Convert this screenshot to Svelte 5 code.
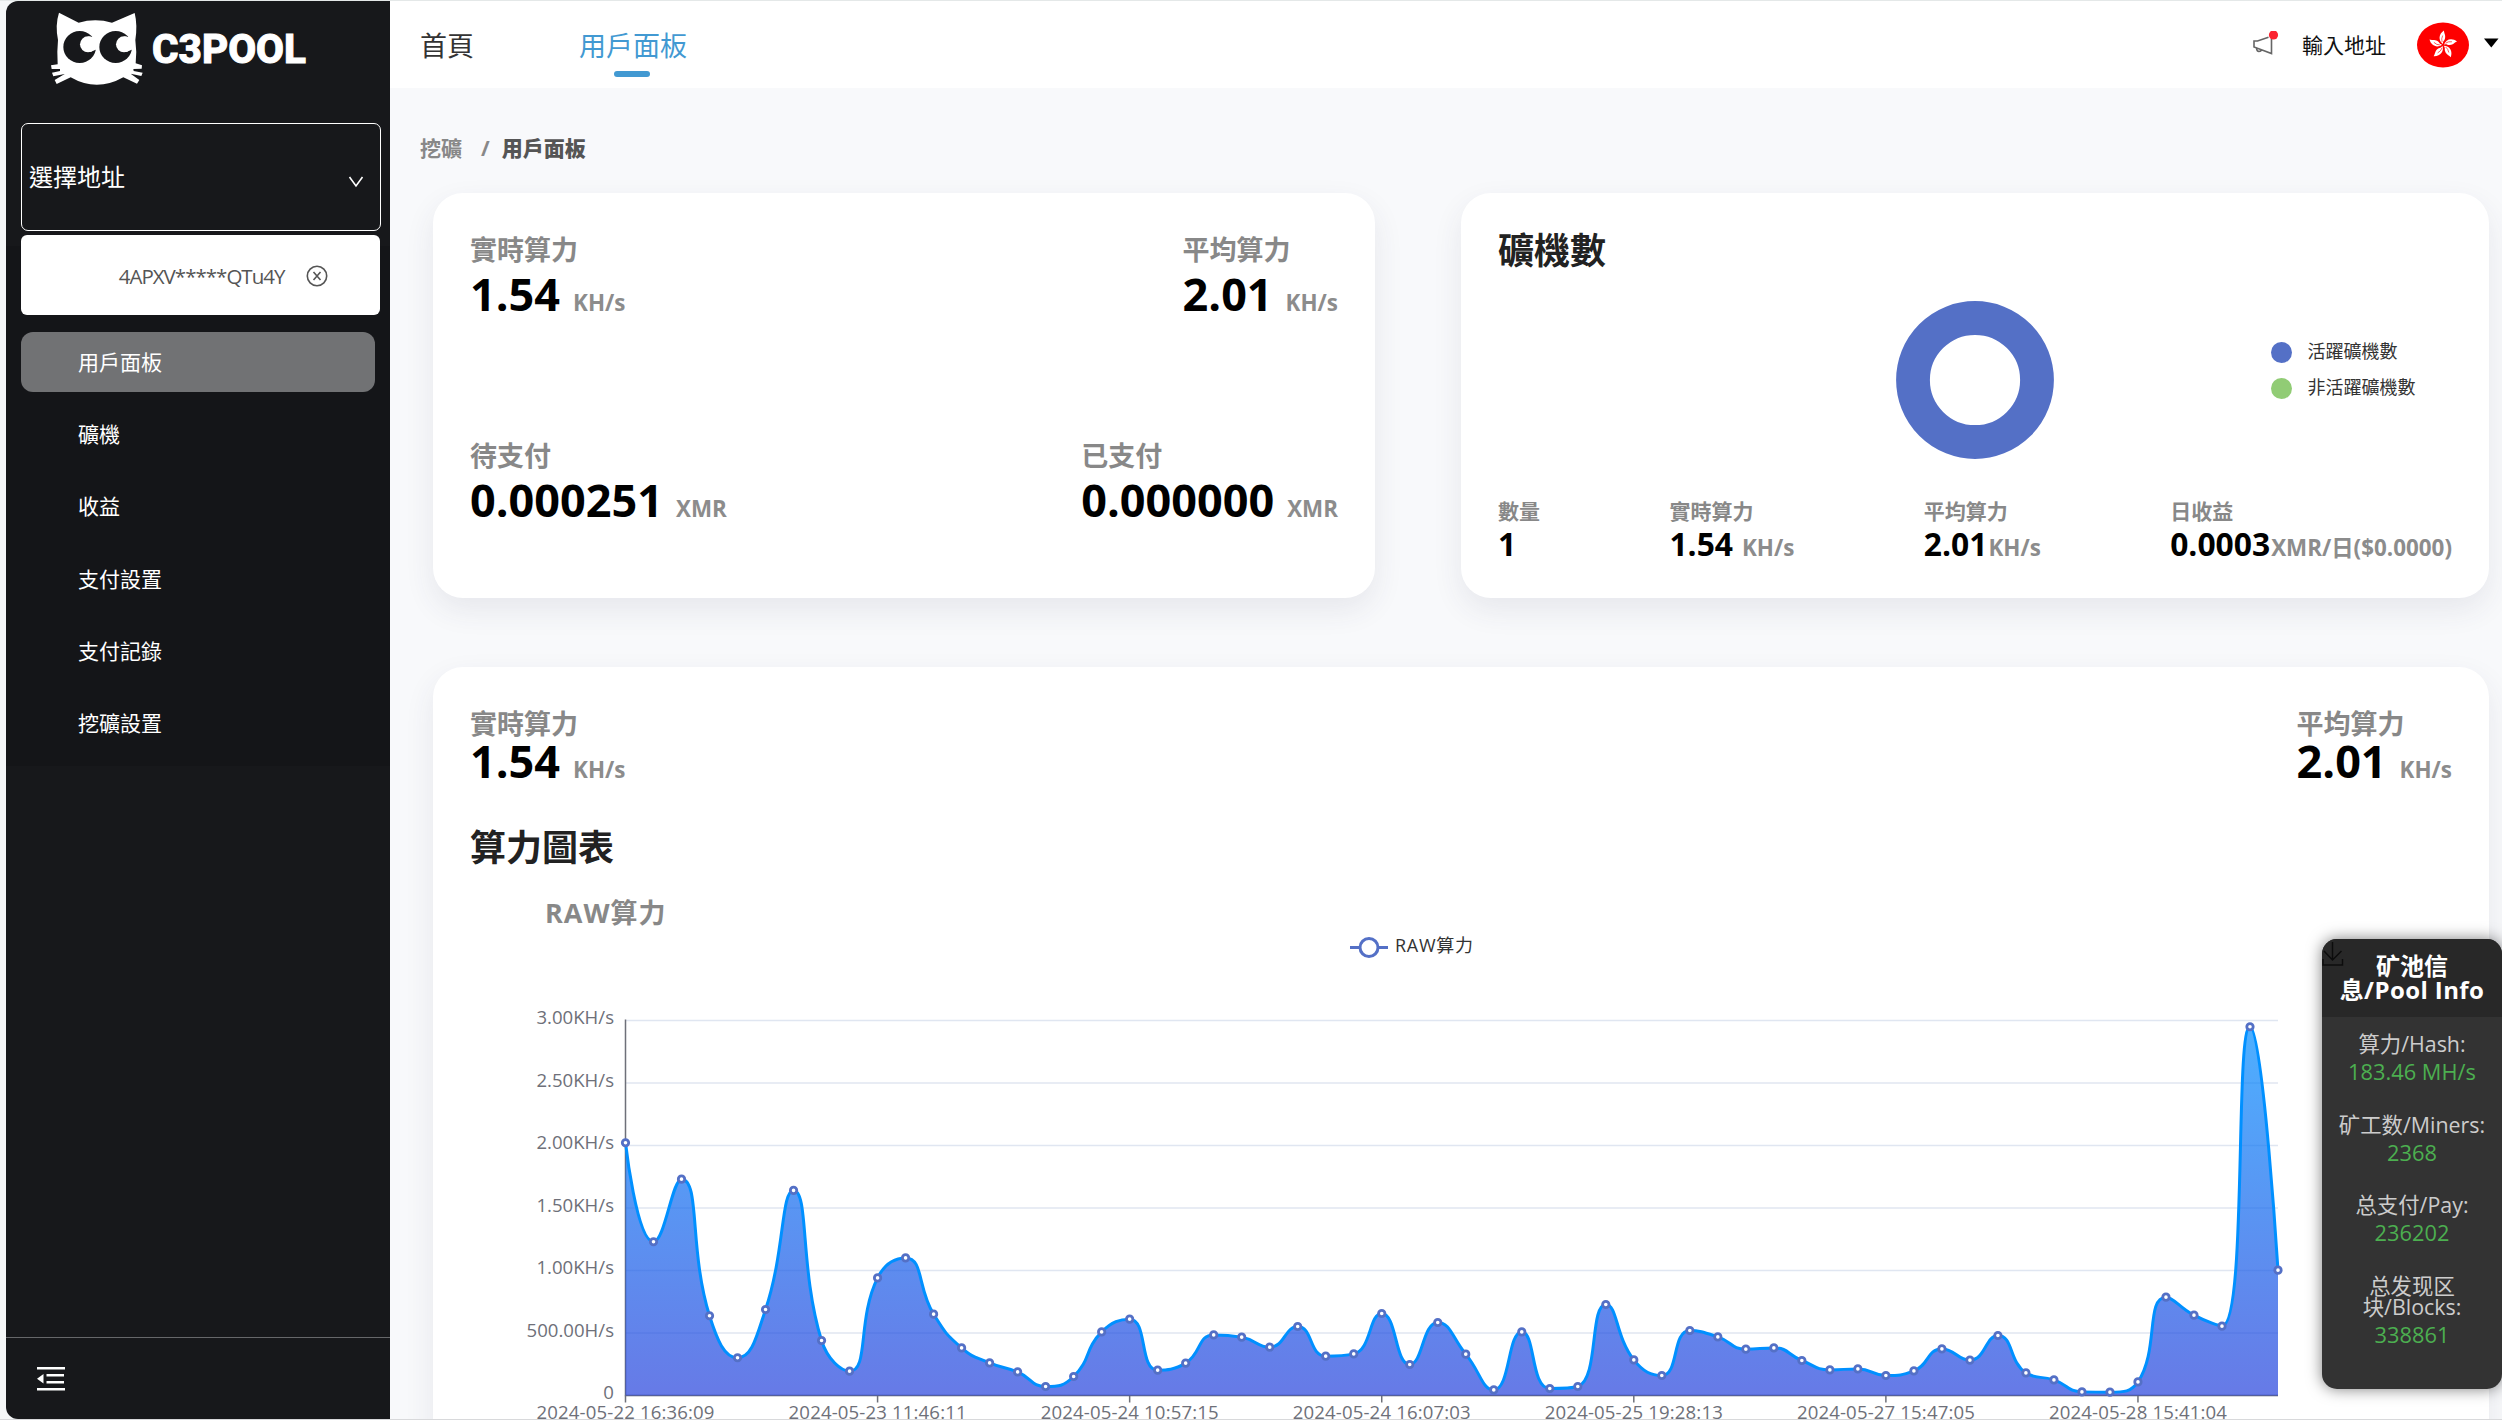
<script>
  const menu = ['用戶面板', '礦機', '收益', '支付設置', '支付記錄', '挖礦設置'];

  const pool = [
    { label: ['算力/Hash:'], value: '183.46 MH/s' },
    { label: ['矿工数/Miners:'], value: '2368' },
    { label: ['总支付/Pay:'], value: '236202' },
    { label: ['总发现区', '块/Blocks:'], value: '338861' }
  ];

  // Hashrate samples in H/s, evenly spaced along the time axis.
  const samples = [
    2022, 1230, 1731, 638, 302, 688, 1641, 440, 195, 941, 1101, 651, 381, 261, 189, 72, 152, 509,
    611, 203, 259, 485, 467, 387, 552, 315, 333, 656, 248, 584, 331, 45, 509, 56, 72, 728, 285, 160,
    520, 469, 371, 381, 280, 205, 213, 160, 197, 373, 283, 480, 181, 125, 29, 27, 109, 787, 643, 555,
    2950, 1003
  ];
  const left = 625.5;
  const right = 2278;
  const base = 1395.5;
  const top = 1020.5;
  const step = (right - left) / (samples.length - 1);
  const pts = samples.map((v, i) => [left + i * step, base - (v / 3000) * (base - top)]);

  const yTicks = ['0', '500.00H/s', '1.00KH/s', '1.50KH/s', '2.00KH/s', '2.50KH/s', '3.00KH/s'].map(
    (label, i) => ({ label, y: base - (i * (base - top)) / 6 })
  );
  const xTicks = [
    '2024-05-22 16:36:09',
    '2024-05-23 11:46:11',
    '2024-05-24 10:57:15',
    '2024-05-24 16:07:03',
    '2024-05-25 19:28:13',
    '2024-05-27 15:47:05',
    '2024-05-28 15:41:04'
  ].map((label, i) => ({ label, x: left + i * 9 * step }));

  const clamp = (v, a, b) => Math.max(Math.min(v, Math.max(a, b)), Math.min(a, b));

  // Smooth cubic path whose control points never overshoot their neighbours.
  function smoothPath(p, k = 0.5) {
    let d = `M${p[0][0]} ${p[0][1]}`;
    let c0 = p[0];
    for (let i = 1; i < p.length; i++) {
      const a = p[i - 1];
      const b = p[i];
      const n = p[i + 1];
      let c1 = b;
      let next = b;
      if (n) {
        const lp = Math.hypot(b[0] - a[0], b[1] - a[1]);
        const ln = Math.hypot(n[0] - b[0], n[1] - b[1]);
        const r = ln / (ln + lp);
        next = [0, 1].map((j) => clamp(b[j] + (n[j] - a[j]) * k * r, n[j], b[j]));
        c1 = [0, 1].map((j) => clamp(b[j] - ((next[j] - b[j]) * lp) / ln, a[j], b[j]));
        next = [0, 1].map((j) => b[j] + ((b[j] - c1[j]) * ln) / lp);
      }
      d += `C${c0[0]} ${c0[1]} ${c1[0]} ${c1[1]} ${b[0]} ${b[1]}`;
      c0 = next;
    }
    return d;
  }
  const line = smoothPath(pts);
  const area = `${line}L${right} ${base}L${left} ${base}Z`;
</script>

{#snippet stat(label, value, unit)}
  <div class="stat">
    <div class="label">{label}</div>
    <div class="value">{value}{#if unit}<span class="unit">{unit}</span>{/if}</div>
  </div>
{/snippet}

<div class="page">
  <aside>
    <svg class="logo" viewBox="0 0 384 100" width="384" height="100">
      <g transform="translate(34 -1) scale(0.33333)">
        <path fill="#fff" d="M57 38L116 68Q166 54 216 68L284 39Q293 75 286 120Q291 155 287 190L306 196L305 206L280 207L281 213L308 218L304 228L272 221L298 240L291 251L250 232Q170 277 92 232L50 252L44 240L74 222L40 229L36 218L60 213V207L35 207L33 196L53 193L52 155L54 120Q45 75 57 38Z" />
        <ellipse cx="119" cy="141" rx="49" ry="48" fill="#17181b" />
        <path fill="#fff" d="M145 109L157 111L176 112L173 147L160 152Q154 156 145 156Z" />
        <circle cx="144" cy="133" r="24" fill="#fff" />
        <ellipse cx="227" cy="141" rx="49" ry="48" fill="#17181b" />
        <path fill="#fff" d="M253 109L265 111L284 112L281 147L268 152Q262 156 253 156Z" />
        <circle cx="252" cy="133" r="24" fill="#fff" />
      </g>
      <text class="brand" x="146" y="61.500" textLength="154" lengthAdjust="spacingAndGlyphs">C3POOL</text>
    </svg>
    <div class="select">
      <span>選擇地址</span>
      <svg width="16" height="12" viewBox="0 0 16 12"><path d="M1.500 1L8 10L14.500 1" fill="none" stroke="#fff" stroke-width="1.600" /></svg>
    </div>
    <div class="address">
      <span>4APXV*****QTu4Y</span>
      <svg width="22" height="22" viewBox="0 0 22 22" fill="none" stroke="#555" stroke-width="1.600">
        <circle cx="11" cy="11" r="9.700" /><path d="M7.500 7L14.500 15M14.500 7L7.500 15" />
      </svg>
    </div>
    <nav>
      {#each menu as item, i}
        <div class="item" class:active={i === 0}>{item}</div>
      {/each}
    </nav>
    <div class="collapse">
      <svg width="28" height="26" viewBox="0 0 28 26" fill="#fff">
        <path d="M0 1H28V3.500H0ZM9.500 8H27V10.500H9.500ZM9.500 15H27V17.500H9.500ZM0 22H28V24.500H0ZM0 12.800L6.500 8V17.600Z" />
      </svg>
    </div>
  </aside>

  <div class="main">
    <header>
      <div class="tabs">
        <div class="tab">首頁</div>
        <div class="tab current">用戶面板<i></i></div>
      </div>
      <div class="tools">
        <svg class="horn" width="28" height="28" viewBox="0 0 28 28">
          <path d="M20.500 8V22.500L3 16V10H6.500L17.500 6.300M5.500 17Q5.700 20.500 8 20.500Q10 20.500 10.500 18.800" fill="none" stroke="#666" stroke-width="1.600" />
          <circle cx="22.500" cy="4" r="4.600" fill="#fb2430" />
        </svg>
        <span class="enter">輸入地址</span>
        <svg class="flag" width="52" height="46" viewBox="0 0 52 46">
          <ellipse cx="26" cy="23" rx="26" ry="22.500" fill="#fe0000" />
          <g transform="translate(26 23)">
            {#each [0, 72, 144, 216, 288] as angle}
              <g transform="rotate({angle})">
                <path d="M0 -1C-5 -4.500 -4.500 -11 1 -14.500C0.800 -12 3 -10 2 -6.500C1.500 -4 -0.500 -4 0 -1Z" fill="#fff" />
                <path d="M-0.900 -3Q-2 -6 -0.300 -9.500" fill="none" stroke="#fe0000" stroke-width="0.600" />
              </g>
            {/each}
          </g>
        </svg>
        <svg class="caret" width="16" height="10" viewBox="0 0 16 10"><path d="M1 0.500H15.500L8.300 9.500Z" /></svg>
      </div>
    </header>

    <div class="crumbs"><span>挖礦</span><em>/</em><b>用戶面板</b></div>

    <div class="cards">
      <section class="card summary">
        <div class="row">
          {@render stat('實時算力', '1.54', 'KH/s')}
          {@render stat('平均算力', '2.01', 'KH/s')}
        </div>
        <div class="row">
          {@render stat('待支付', '0.000251', 'XMR')}
          {@render stat('已支付', '0.000000', 'XMR')}
        </div>
      </section>

      <section class="card miners">
        <h2>礦機數</h2>
        <div class="donut">
          <svg width="160" height="160" viewBox="0 0 160 160"><circle cx="80" cy="80" r="62" fill="none" stroke="#5470c6" stroke-width="33.800" /></svg>
          <ul>
            <li><i class="on"></i>活躍礦機數</li>
            <li><i class="off"></i>非活躍礦機數</li>
          </ul>
        </div>
        <div class="row small">
          {@render stat('數量', '1', '')}
          {@render stat('實時算力', '1.54', 'KH/s')}
          <div class="tight">{@render stat('平均算力', '2.01', 'KH/s')}</div>
          <div class="tight">{@render stat('日收益', '0.0003', 'XMR/日($0.0000)')}</div>
        </div>
      </section>
    </div>

    <section class="card chart">
      <div class="row">
        {@render stat('實時算力', '1.54', 'KH/s')}
        {@render stat('平均算力', '2.01', 'KH/s')}
      </div>
      <h2>算力圖表</h2>
      <h3>RAW算力</h3>
      <svg class="plot" width="1980" height="487" viewBox="470 932 1980 487">
        <defs>
          <linearGradient id="fill" x1="0" y1="0" x2="0" y2="1">
            <stop offset="0" stop-color="#008dff" />
            <stop offset="1" stop-color="#2541dc" />
          </linearGradient>
        </defs>
        <g stroke="#5470c6" stroke-width="3" fill="#fff">
          <path d="M1350 947.500H1388" />
          <circle cx="1369" cy="947.500" r="9" />
        </g>
        <text class="legend" x="1395" y="951.500" textLength="78">RAW算力</text>
        {#each yTicks as t}
          <path d="M{left} {t.y}H{right}" stroke="#e0e6f1" stroke-width="1.500" />
          <text class="tick" x="614" y={t.y + 3.5} text-anchor="end">{t.label}</text>
        {/each}
        <path d="M{left} {top - 1}V{base}H{right}" fill="none" stroke="#6e7079" stroke-width="1.500" />
        {#each xTicks as t}
          <path d="M{t.x} {base}V{base + 7}" stroke="#6e7079" stroke-width="1.500" />
          <text class="tick" x={t.x} y="1419" text-anchor="middle" textLength="178">{t.label}</text>
        {/each}
        <path d={area} fill="url(#fill)" opacity="0.7" />
        <path d={line} fill="none" stroke="#0090ff" stroke-width="3" />
        {#each pts as p}
          <circle cx={p[0]} cy={p[1]} r="3.200" fill="#fff" stroke="#5470c6" stroke-width="2.800" />
        {/each}
      </svg>
    </section>
  </div>

  <div class="pool">
    <svg class="save" width="22" height="26" viewBox="0 0 22 26" fill="none" stroke="#0c0c0c" stroke-width="1.500">
      <path d="M10.500 0V18M2 9L10.500 18L19.500 9M1 17V23H20.500V17" />
    </svg>
    <div class="pool-title">矿池信<br /><span>息/Pool Info</span></div>
    {#each pool as p}
      <div class="entry">
        {#each p.label as part}<div>{part}</div>{/each}
        <strong>{p.value}</strong>
      </div>
    {/each}
  </div>
</div>

<style>
  :global(body) { background: #f5f7f8; }
  .page {
    position: relative;
    display: flex;
    box-sizing: border-box;
    width: 2502px;
    height: 1420px;
    padding-left: 6px;
    border-top: 1px solid #e4e8e8;
    border-bottom: 1px solid #d8d9db;
    overflow: hidden;
    font-family: 'Open Sans', 'Noto Sans CJK TC', sans-serif;
  }
  aside {
    display: flex;
    flex-direction: column;
    box-sizing: border-box;
    width: 384px;
    background: linear-gradient(#17181b 0 245px, #141518 245px 765px, #17181b 765px);
    border-radius: 12px 0 0 12px;
    color: #fff;
  }
  .logo { display: block; height: 100px; flex: none; }
  .brand { font: 800 41px Roboto, 'Liberation Sans', sans-serif; fill: #fff; stroke: #fff; stroke-width: 1px; }
  .select {
    display: flex;
    align-items: center;
    justify-content: space-between;
    box-sizing: border-box;
    height: 108px;
    margin: 22px 9px 0 15px;
    padding: 0 16px 0 7px;
    border: 1.5px solid #fff;
    border-radius: 7px;
    font-size: 24px;
    line-height: 36px;
  }
  .select svg { margin-top: 10px; }
  .address {
    display: flex;
    align-items: center;
    justify-content: flex-end;
    gap: 21px;
    box-sizing: border-box;
    height: 80px;
    margin: 4px 10px 0 15px;
    padding: 1px 52.5px 0 0;
    background: #fff;
    border-radius: 6px;
    color: #555;
    font-size: 20.5px;
    letter-spacing: -0.98px;
  }
  nav { flex: 1; margin: 17px 15px 0; }
  .item {
    height: 60px;
    margin-bottom: 12.2px;
    padding-left: 57px;
    border-radius: 12px;
    font-size: 21px;
    line-height: 60px;
  }
  .item.active { background: #717274; }
  .collapse {
    display: flex;
    align-items: center;
    box-sizing: border-box;
    height: 82px;
    padding-left: 31px;
    border-top: 1.5px solid #66676a;
  }
  .main { flex: 1; background: #f8f9fb; }
  header {
    display: flex;
    align-items: center;
    justify-content: space-between;
    height: 87px;
    padding: 0 3px 0 30px;
    background: #fff;
  }
  .tabs { display: flex; gap: 105px; padding-top: 3px; font-size: 27px; line-height: 40px; color: #333; }
  .tab { position: relative; }
  .current { color: #4299d2; }
  .tab i {
    position: absolute;
    left: 35px;
    top: 45px;
    width: 36px;
    height: 6px;
    border-radius: 3px;
    background: #4299d2;
  }
  .tools { display: flex; align-items: center; }
  .horn { margin: 0 23px 0 0; }
  .enter { margin-right: 30px; font-size: 21px; line-height: 32px; color: #111; }
  .caret { margin: 0 0 4px 14px; }
  .flag { margin-left: 1px; }
  .crumbs {
    display: flex;
    padding: 44px 0 2px 30px;
    font-size: 21px;
    font-weight: 700;
    line-height: 32px;
    color: #888;
  }
  .crumbs em { margin: 0 12px 0 19px; font-style: normal; }
  .crumbs b { color: #555; }
  .cards { display: flex; gap: 86px; padding: 27px 13px 0 43px; }
  .card {
    box-sizing: border-box;
    padding: 39px 37px 0 37px;
    background: #fff;
    border-radius: 30px;
    box-shadow: 0 12px 30px rgba(50, 60, 90, 0.09);
  }
  .summary { width: 942px; height: 405px; }
  .miners { width: 1028px; height: 405px; }
  .chart { height: 800px; margin: 69px 13px 0 43px; }
  .row { display: flex; justify-content: space-between; }
  .summary .row { height: 205.5px; }
  .label { font-size: 27px; font-weight: 700; line-height: 36px; color: #888; }
  .value { font-size: 45px; font-weight: 700; line-height: 52px; color: #000; white-space: nowrap; }
  .chart .value { height: 40px; line-height: 38px; }
  .unit { margin-left: 13px; font-size: 22.4px; line-height: 0; color: #8c8c8c; }
  .small .label { font-size: 21px; line-height: 30px; }
  .small .value { font-size: 31.8px; line-height: 36px; }
  .small .unit { margin-left: 9px; font-size: 22.4px; }
  .small .tight .unit { margin-left: 1px; }
  h2 { margin: 0; font-size: 36px; font-weight: 700; line-height: 37px; color: #222; }
  .chart h2 { margin-top: 42px; line-height: 48px; }
  h3 { margin: 23px 0 1px 75px; font-size: 27px; font-weight: 700; line-height: 36px; color: #888; letter-spacing: 1px; }
  .donut { display: flex; align-items: center; height: 160px; margin: 31px 0 35.5px 397px; }
  ul { margin: -22px 0 0 216px; padding: 0; list-style: none; font-size: 18px; line-height: 36px; color: #333; }
  li { display: flex; align-items: center; white-space: nowrap; }
  li i { width: 21px; height: 21px; margin: 3px 15.5px 0 0; border-radius: 50%; }
  .on { background: #5470c6; }
  .off { background: #91cc75; }
  .plot { display: block; }
  .tick { font-size: 18.6px; fill: #6e7079; }
  .legend { font-size: 18px; fill: #333; }
  .pool {
    position: absolute;
    left: 2322px;
    top: 938px;
    width: 180px;
    height: 450px;
    border-radius: 15px;
    background: #333;
    box-shadow: 0 0 15px rgba(0, 0, 0, 0.5);
    overflow: hidden;
    color: #ccc;
    font-family: 'Open Sans', 'Noto Sans CJK SC', sans-serif;
    text-align: center;
  }
  .save { position: absolute; left: 0; top: 3px; }
  .pool-title {
    margin-bottom: 16px;
    padding: 15px 0;
    background: #282828;
    color: #fff;
    font-size: 24px;
    font-weight: 700;
    line-height: 24px;
    white-space: nowrap;
  }
  .pool-title span { letter-spacing: 0.4px; }
  .entry { margin-bottom: 31.6px; font-size: 21.4px; line-height: 21px; white-space: nowrap; }
  .entry strong { display: block; margin-top: 7px; color: #4caf50; font-size: 21.8px; font-weight: 400; }
</style>
